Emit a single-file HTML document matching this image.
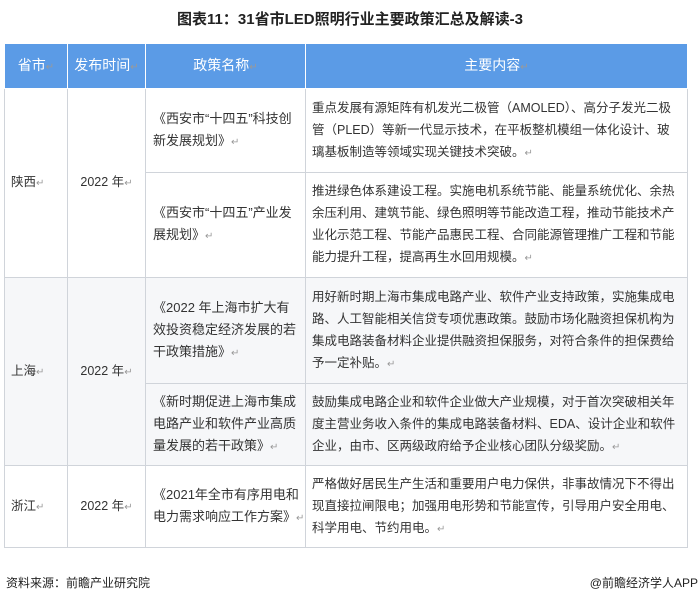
<!DOCTYPE html>
<html><head><meta charset="utf-8"><style>
body{margin:0;width:700px;height:596px;background:#fff;font-family:"Liberation Sans","Noto Sans CJK SC",sans-serif;color:#333;position:relative;overflow:hidden}
.t{position:absolute;top:8px;left:0;width:700px;text-align:center;font-weight:bold;font-size:15px;color:#222}
table{position:absolute;left:4px;top:43px;border-collapse:collapse;font-size:12.5px;table-layout:fixed}
td,th{border:1px solid #d0d4da;padding:0 6px;line-height:22px}
th{background:#5b9be6;color:#fff;font-weight:normal;font-size:14px;height:44px;border-color:#fff}
.c{text-align:center}
.n{font-size:13px;padding-left:7px;padding-right:0;white-space:nowrap;overflow:hidden}
.g td{background:#f6f7f9}
.r{color:#999;font-size:10px}
.f{position:absolute;top:574px;font-size:12px;color:#222}
</style></head><body>
<div class="t">图表11：31省市LED照明行业主要政策汇总及解读-3</div>
<table>
<colgroup><col style="width:63px"><col style="width:78px"><col style="width:160px"><col style="width:382px"></colgroup>
<tr><th>省市<span class="r">↵</span></th><th>发布时间<span class="r">↵</span></th><th>政策名称<span class="r">↵</span></th><th>主要内容<span class="r">↵</span></th></tr>
<tr style="height:84px"><td rowspan="2">陕西<span class="r">↵</span></td><td rowspan="2" class="c">2022 年<span class="r">↵</span></td><td class="n">《西安市“十四五”科技创<br>新发展规划》<span class="r">↵</span></td><td>重点发展有源矩阵有机发光二极管（AMOLED）、高分子发光二极管（PLED）等新一代显示技术，在平板整机模组一体化设计、玻璃基板制造等领域实现关键技术突破。<span class="r">↵</span></td></tr>
<tr style="height:105px"><td class="n">《西安市“十四五”产业发<br>展规划》<span class="r">↵</span></td><td>推进绿色体系建设工程。实施电机系统节能、能量系统优化、余热余压利用、建筑节能、绿色照明等节能改造工程，推动节能技术产业化示范工程、节能产品惠民工程、合同能源管理推广工程和节能能力提升工程，提高再生水回用规模。<span class="r">↵</span></td></tr>
<tr class="g" style="height:106px"><td rowspan="2">上海<span class="r">↵</span></td><td rowspan="2" class="c">2022 年<span class="r">↵</span></td><td class="n">《2022 年上海市扩大有<br>效投资稳定经济发展的若<br>干政策措施》<span class="r">↵</span></td><td>用好新时期上海市集成电路产业、软件产业支持政策，实施集成电路、人工智能相关信贷专项优惠政策。鼓励市场化融资担保机构为集成电路装备材料企业提供融资担保服务，对符合条件的担保费给予一定补贴。<span class="r">↵</span></td></tr>
<tr class="g" style="height:82px"><td class="n">《新时期促进上海市集成<br>电路产业和软件产业高质<br>量发展的若干政策》<span class="r">↵</span></td><td>鼓励集成电路企业和软件企业做大产业规模，对于首次突破相关年度主营业务收入条件的集成电路装备材料、EDA、设计企业和软件企业，由市、区两级政府给予企业核心团队分级奖励。<span class="r">↵</span></td></tr>
<tr style="height:82px"><td>浙江<span class="r">↵</span></td><td class="c">2022 年<span class="r">↵</span></td><td class="n">《2021年全市有序用电和<br>电力需求响应工作方案》<span class="r">↵</span></td><td>严格做好居民生产生活和重要用户电力保供，非事故情况下不得出现直接拉闸限电；加强用电形势和节能宣传，引导用户安全用电、科学用电、节约用电。<span class="r">↵</span></td></tr>
</table>
<div class="f" style="left:6px">资料来源：前瞻产业研究院</div>
<div class="f" style="right:2px">@前瞻经济学人APP</div>
</body></html>
